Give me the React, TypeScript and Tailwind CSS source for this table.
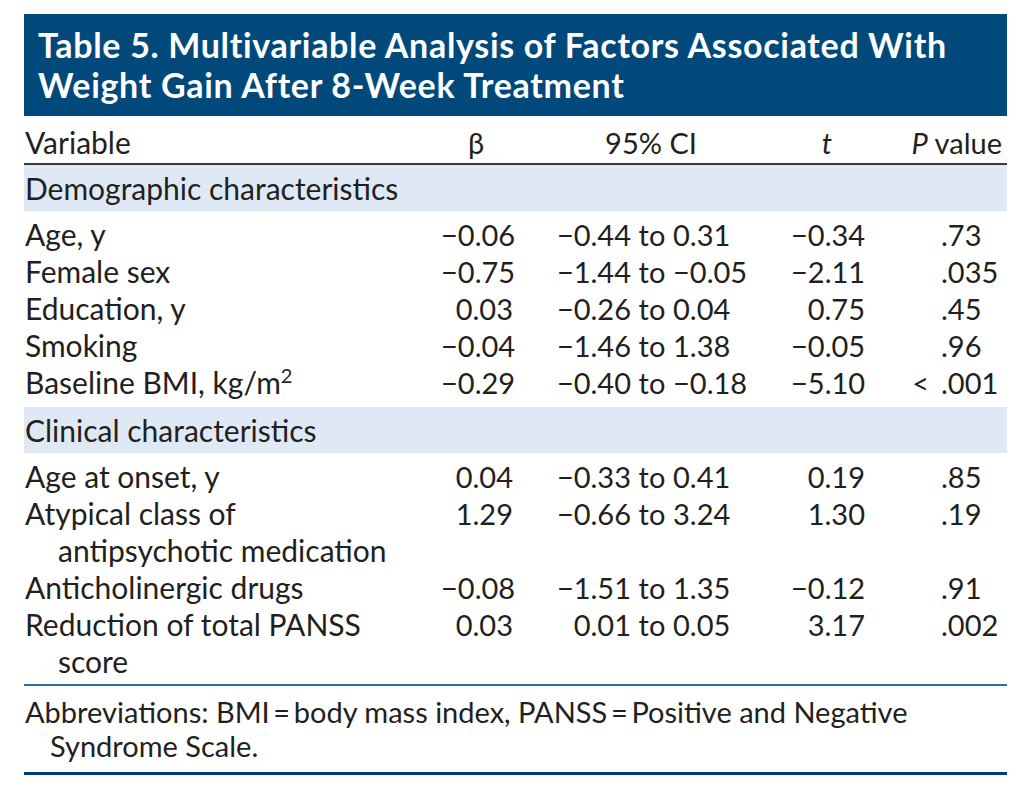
import React from "react";

const M = "\u2212";

type Row = {
  label: string[];
  sup?: string;
  beta: string;
  lo: string;
  hi: string;
  t: string;
  pre?: string;
  p: string;
};

const demographic: Row[] = [
  { label: ["Age, y"], beta: `${M}0.06`, lo: `${M}0.44`, hi: "0.31", t: `${M}0.34`, p: ".73" },
  { label: ["Female sex"], beta: `${M}0.75`, lo: `${M}1.44`, hi: `${M}0.05`, t: `${M}2.11`, p: ".035" },
  { label: ["Education, y"], beta: "0.03", lo: `${M}0.26`, hi: "0.04", t: "0.75", p: ".45" },
  { label: ["Smoking"], beta: `${M}0.04`, lo: `${M}1.46`, hi: "1.38", t: `${M}0.05`, p: ".96" },
  { label: ["Baseline BMI, kg/m"], sup: "2", beta: `${M}0.29`, lo: `${M}0.40`, hi: `${M}0.18`, t: `${M}5.10`, pre: "<", p: ".001" },
];

const clinical: Row[] = [
  { label: ["Age at onset, y"], beta: "0.04", lo: `${M}0.33`, hi: "0.41", t: "0.19", p: ".85" },
  { label: ["Atypical class of", "antipsychotic medication"], beta: "1.29", lo: `${M}0.66`, hi: "3.24", t: "1.30", p: ".19" },
  { label: ["Anticholinergic drugs"], beta: `${M}0.08`, lo: `${M}1.51`, hi: "1.35", t: `${M}0.12`, p: ".91" },
  { label: ["Reduction of total PANSS", "score"], beta: "0.03", lo: "0.01", hi: "0.05", t: "3.17", p: ".002" },
];

const cols = "grid grid-cols-[416px_72px_118px_42px_118px_74px_76px_67px]";
const cell = "h-[37px] leading-[37px] text-[29px]";

function DataRow({ r }: { r: Row }) {
  return (
    <div className={cols}>
      <div>
        {r.label.map((l, i) => (
          <div key={i} className={`h-[37px] leading-[37px] whitespace-nowrap ${i > 0 ? "pl-[33px]" : ""}`}>
            {l}
            {r.sup && i === 0 ? <sup className="text-[20px] -top-[11px]">{r.sup}</sup> : null}
          </div>
        ))}
      </div>
      <div className={`${cell} text-right`}>{r.beta}</div>
      <div className={`${cell} text-right`}>{r.lo}</div>
      <div className={`${cell} text-center`}>to</div>
      <div className={cell}>{r.hi}</div>
      <div className={`${cell} text-right`}>{r.t}</div>
      <div className={`${cell} text-right pr-[12px]`}>{r.pre}</div>
      <div className={cell}>{r.p}</div>
    </div>
  );
}

function Band({ text }: { text: string }) {
  return <div className="h-[46px] leading-[46px] bg-[#dfe9f5] pl-px">{text}</div>;
}

export default function App() {
  return (
    <div className="w-[1023px] h-[804px] bg-white pt-[14px] pl-[24px] text-[#231f20] font-['Lato',sans-serif] text-[30px]">
      <div className="w-[983px]">
        <div className="h-[102px] bg-[#01497b] pl-[14px] pt-[11px] text-white font-bold text-[34px] leading-[40px] tracking-[0.02em] whitespace-nowrap">
          <div>Table 5. Multivariable Analysis of Factors Associated With</div>
          <div>Weight Gain After 8-Week Treatment</div>
        </div>

        <div className={`${cols} h-[49px] items-center pt-[4px] border-b-2 border-[#3a3a3a] text-[29px]`}>
          <div className="pl-px text-[30px]">Variable</div>
          <div className="text-center">β</div>
          <div className="col-span-3 text-center">95% CI</div>
          <div className="text-center italic">t</div>
          <div className="col-span-2 text-right pr-[5px]">
            <span className="italic">P</span> value
          </div>
        </div>

        <Band text="Demographic characteristics" />
        <div className="pt-[5px] pb-[6px] pl-px">
          {demographic.map((r, i) => (
            <DataRow key={i} r={r} />
          ))}
        </div>

        <Band text="Clinical characteristics" />
        <div className="pt-[5px] pb-[4px] pl-px">
          {clinical.map((r, i) => (
            <DataRow key={i} r={r} />
          ))}
        </div>

        <div className="border-t-2 border-[#2f6d9e] border-b-[3px] border-b-[#003f72] pt-[9px] pb-[9px] pl-px leading-[34px] text-[29px] whitespace-nowrap">
          <div>Abbreviations: BMI{"\u2009"}={"\u2009"}body mass index, PANSS{"\u2009"}={"\u2009"}Positive and Negative</div>
          <div className="pl-[25px]">Syndrome Scale.</div>
        </div>
      </div>
    </div>
  );
}
